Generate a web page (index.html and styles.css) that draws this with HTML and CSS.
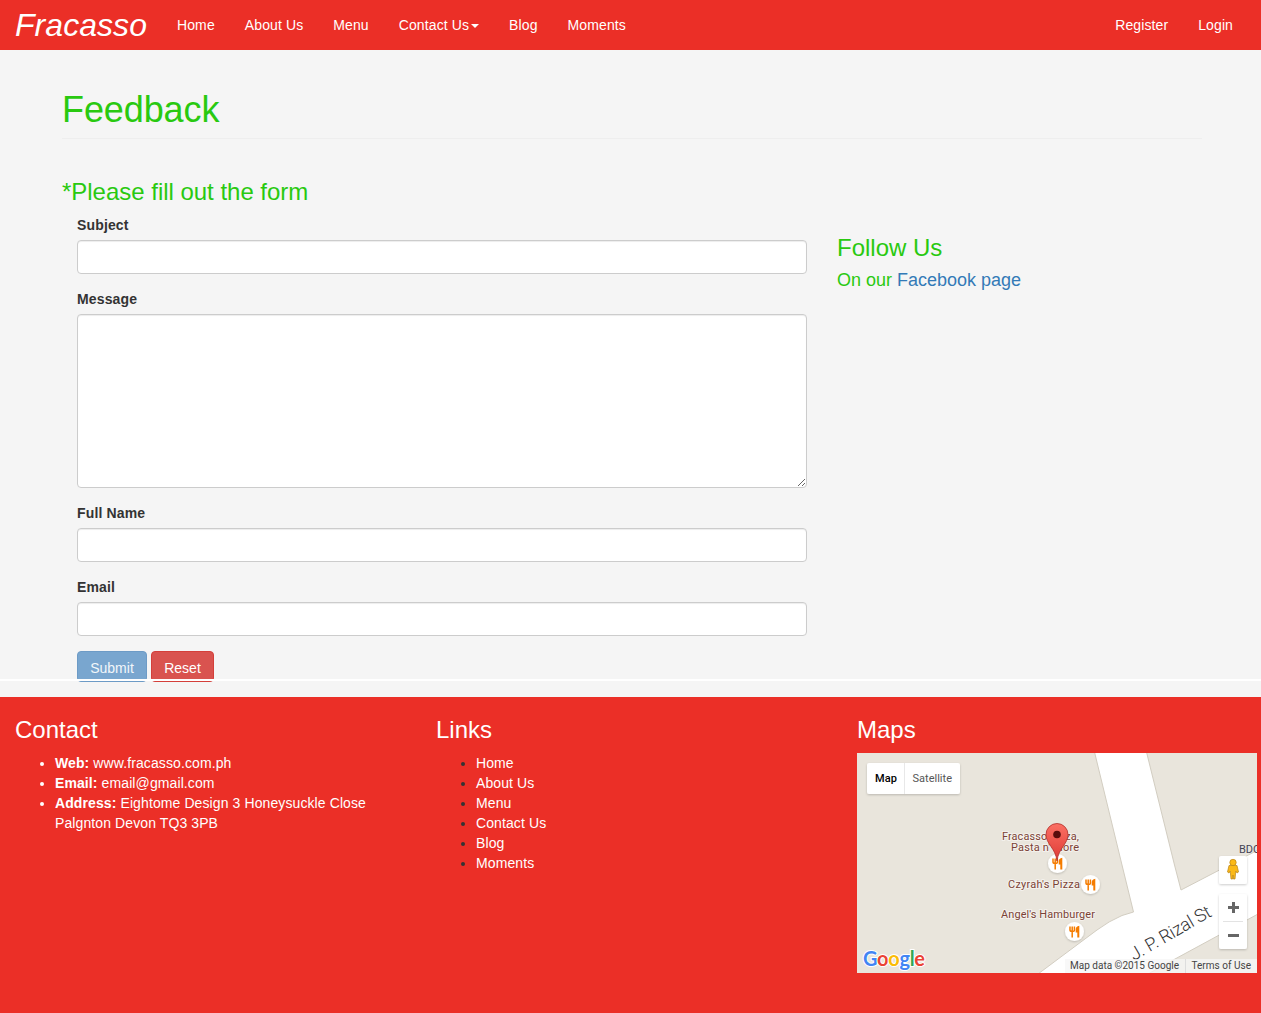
FILE: index.html
```html
<!DOCTYPE html>
<html lang="en">
<head>
<meta charset="utf-8">
<title>Fracasso - Feedback</title>
<link rel="stylesheet" href="styles.css">
</head>
<body>
<nav class="navbar">
  <a class="brand">Fracasso</a>
  <ul class="nav">
    <li>Home</li><li>About Us</li><li>Menu</li><li>Contact Us<span class="caret"></span></li><li>Blog</li><li>Moments</li>
  </ul>
  <ul class="nav nav-right"><li>Register</li><li>Login</li></ul>
</nav>
<main class="page">
  <h1 class="page-title">Feedback</h1>
  <h3 class="form-title">*Please fill out the form</h3>
  <div class="columns">
    <form class="form">
      <label class="label" for="subject">Subject</label>
      <input class="control" id="subject" type="text">
      <label class="label" for="message">Message</label>
      <textarea class="control message" id="message"></textarea>
      <label class="label" for="name">Full Name</label>
      <input class="control" id="name" type="text">
      <label class="label" for="email">Email</label>
      <input class="control" id="email" type="text">
      <div class="actions">
        <button class="btn btn-submit" type="button">Submit</button>
        <button class="btn btn-reset" type="button">Reset</button>
      </div>
    </form>
    <aside class="follow">
      <h3>Follow Us</h3>
      <h4>On our <a>Facebook page</a></h4>
    </aside>
  </div>
  <span class="rule"></span>
</main>
<footer class="footer">
  <section class="contact">
    <h3>Contact</h3>
    <ul>
      <li><b>Web:</b> www.fracasso.com.ph</li>
      <li><b>Email:</b> email@gmail.com</li>
      <li><b>Address:</b> Eightome Design 3 Honeysuckle Close<br>Palgnton Devon TQ3 3PB</li>
    </ul>
  </section>
  <section class="links">
    <h3>Links</h3>
    <ul>
      <li><a>Home</a></li><li><a>About Us</a></li><li><a>Menu</a></li><li><a>Contact Us</a></li><li><a>Blog</a></li><li><a>Moments</a></li>
    </ul>
  </section>
  <section class="maps">
    <h3>Maps</h3>
    <svg class="map" width="400" height="220" viewBox="0 0 400 220">
      <defs>
        <filter id="shadow" x="-20%" y="-20%" width="140%" height="150%"><feDropShadow dx="0" dy="1" stdDeviation="1" flood-color="#000" flood-opacity=".2"/></filter>
        <linearGradient id="pin" x1="0" y1="0" x2="0" y2="1"><stop offset="0" stop-color="#fb7064"/><stop offset="1" stop-color="#de3b35"/></linearGradient>
        <g id="food">
          <circle r="9.5" fill="#fff" filter="url(#shadow)"/>
          <path d="M-4.500 -5v3.500q0 1.500 2.200 1.500t2.200 -1.500v-3.500M-2.300 -5v11" fill="none" stroke="#f57c00" stroke-width="1.500"/>
          <path d="M4.800 -5.800v11.800h-2v-5h-1.600v-3q0-3.300 3.600-3.800z" fill="#f57c00"/>
        </g>
      </defs>
      <rect width="400" height="220" fill="#e9e5dc"/>
      <path d="M237.500 -1L265 112L276.500 159L265 162.500Q252 168 240 177L181 221H291L318 206L401 161V97L324 137L317.500 112L289.500 -1Z" fill="#fff" stroke="#d2cdc1" stroke-width="1"/>
      <g class="place">
        <text x="145" y="87" textLength="77">Fracasso Pizza,</text>
        <text x="154" y="98" textLength="68">Pasta n' More</text>
        <text x="151" y="135" textLength="72">Czyrah's Pizza</text>
        <text x="144" y="165" textLength="94">Angel's Hamburger</text>
      </g>
      <text class="bank" x="382" y="100">BDO</text>
      <text class="street" transform="translate(277 208) rotate(-30)" textLength="91">J. P. Rizal St</text>
      <use href="#food" x="200.500" y="110.500"/>
      <use href="#food" x="233.500" y="131.500"/>
      <use href="#food" x="217.500" y="178.500"/>
      <path d="M200 108C198.500 95 189 91 189 81.500A11 11 0 0 1 211 81.500C211 91 201.500 95 200 108Z" fill="url(#pin)" stroke="#b0302b" stroke-width=".8"/>
      <circle cx="200" cy="81.500" r="3.800" fill="#590d0c"/>
      <rect x="10" y="10" width="93" height="31" rx="2" fill="#fff" filter="url(#shadow)"/>
      <path d="M47.500 10v31" stroke="#e8e8e8"/>
      <text class="type type-on" x="18" y="29" textLength="22">Map</text>
      <text class="type" x="55.500" y="29" textLength="39.500">Satellite</text>
      <rect x="362" y="103" width="28" height="28" rx="2" fill="#fff" filter="url(#shadow)"/>
      <g fill="#fbb917" stroke="#b98216" stroke-width=".7">
        <path d="M372 112.500h8l1.500 6.500-1.500 1-1.200-2-.8 8h-1.600l-.4-4-.4 4H374l-.8-8-1.200 2-1.500-1z"/>
        <circle cx="376" cy="109.500" r="3.200"/>
      </g>
      <rect x="362" y="141" width="28" height="55" rx="2" fill="#fff" filter="url(#shadow)"/>
      <path d="M366 168.500h20" stroke="#e3e3e3"/>
      <path d="M371 154.500h11M376.500 149v11M371 182.500h11" stroke="#666" stroke-width="3"/>
      <rect x="208" y="206" width="192" height="14" fill="#f5f5f5" opacity=".75"/>
      <path d="M328.500 206v14" stroke="#ddd"/>
      <text class="legal" x="213" y="216" textLength="109">Map data ©2015 Google</text>
      <text class="legal" x="334.500" y="216" textLength="59.500">Terms of Use</text>
      <text class="logo" x="6" y="213" textLength="62"><tspan fill="#4285f4">G</tspan><tspan fill="#ea4335">o</tspan><tspan fill="#fbbc05">o</tspan><tspan fill="#4285f4">g</tspan><tspan fill="#34a853">l</tspan><tspan fill="#ea4335">e</tspan></text>
    </svg>
  </section>
</footer>
</body>
</html>
```
FILE: styles.css
```css
* { box-sizing: border-box; }
body {
  margin: 0;
  background: #f5f5f5;
  color: #333;
  font: 14px/20px "Liberation Sans", Arial, sans-serif;
  height: 1013px;
  display: flex;
  flex-direction: column;
  overflow: hidden;
}
h1, h3, h4 { margin: 0; font-weight: 400; line-height: 1.1; }
h3 { font-size: 24px; }
h4 { font-size: 18px; }

.navbar { height: 50px; flex: none; display: flex; background: #eb2f27; color: #fff; padding: 0 13px 0 15px; }
.brand { font-size: 32px; font-style: italic; line-height: 50px; width: 147px; letter-spacing: .05px; }
.nav { display: flex; list-style: none; margin: 0; padding: 0; letter-spacing: .11px; }
.nav li { padding: 15px; white-space: nowrap; }
.nav-right { margin-left: auto; }
.caret { display: inline-block; margin-left: 2px; vertical-align: middle; border-top: 4px solid; border-left: 4px solid transparent; border-right: 4px solid transparent; }

.page { position: relative; height: 647px; flex: none; padding: 40px 59px 0 62px; }
.page-title { font-size: 36px; height: 49px; letter-spacing: -.1px; border-bottom: 1px solid #eee; color: #29c910; }
.form-title { margin-top: 40px; color: #29c910; height: 26px; letter-spacing: -.02px; }
.columns { display: flex; gap: 30px; padding: 10px 0 0 15px; }
.form { width: 730px; }
.label { display: block; font-weight: 700; margin-bottom: 5px; letter-spacing: .15px; }
.control {
  display: block;
  width: 100%;
  height: 34px;
  margin: 0 0 15px;
  padding: 6px 12px;
  border: 1px solid #ccc;
  border-radius: 4px;
  background: #fff;
  box-shadow: inset 0 1px 1px rgba(0, 0, 0, .075);
  font: inherit;
}
.message { height: 174px; resize: vertical; }
.actions { display: flex; gap: 4px; }
.btn { height: 31px; flex: none; padding: 6px 11px 3px; border: 1px solid; border-radius: 4px; color: #fff; font: inherit; }
.btn-submit { width: 70px; background: #79a6cf; border-color: #6d9bc6; color: #f2f6fa; }
.btn-reset { width: 63px; background: #d9534f; border-color: #d43f3a; }
.rule { position: absolute; left: 0; right: 0; top: 629px; height: 2px; background: #fff; }
.follow { padding-top: 20px; color: #29c910; }
.follow h4 { margin-top: 10px; }
.follow a { color: #337ab7; }

.footer { flex: 1; display: grid; grid-template-columns: 421px 421px 1fr; padding: 20px 0 0 15px; background: #eb2f27; color: #fff; }
.footer h3 { height: 26px; }
.footer ul { margin: 10px 0 0; padding-left: 40px; letter-spacing: .1px; }
.links li::marker { color: #333; }
.map { display: block; margin-top: 10px; }
.place { font: 11px Roboto, sans-serif; fill: #7b4236; stroke: #f4f1ec; stroke-width: 2px; paint-order: stroke; }
.bank { font: 11px Roboto, sans-serif; fill: #445; }
.street { font: 18px Roboto, sans-serif; font-weight: 300; fill: #333; }
.type { font: 11px Roboto, sans-serif; fill: #565656; }
.type-on { font-weight: 500; fill: #000; }
.legal { font: 10px Roboto, sans-serif; fill: #444; }
.logo { font: 700 20px Lato, sans-serif; stroke: #fff; stroke-width: 2px; paint-order: stroke; }
```
